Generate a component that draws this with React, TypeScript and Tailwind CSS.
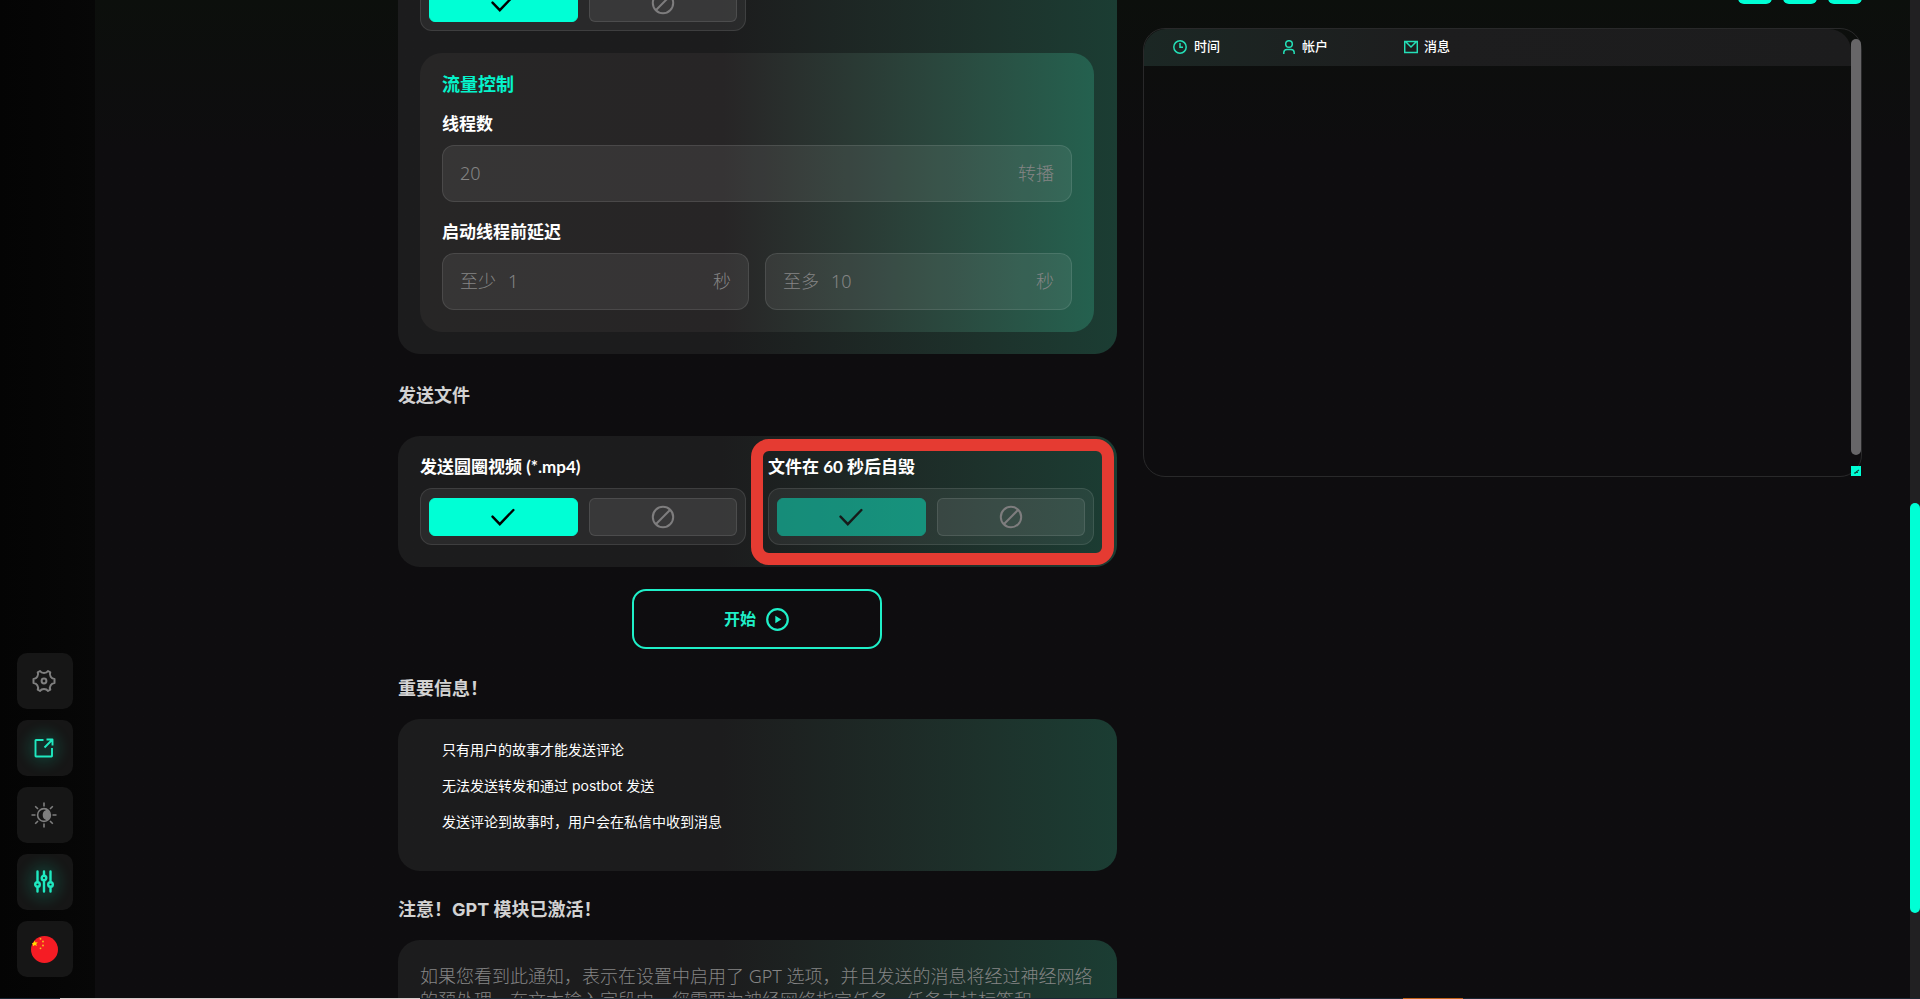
import React, { useId, useState } from "react";

const SANS = "font-['Inter','Noto_Sans_CJK_SC',sans-serif]";
const LABEL = "font-['Lato','Noto_Sans_CJK_SC',sans-serif]";
const PLAIN = "font-['Noto_Sans','Noto_Sans_CJK_SC',sans-serif]";

function CheckIcon() {
  return (
    <svg width="24" height="18" viewBox="0 0 24 18" fill="none" stroke="currentColor" strokeWidth="2.4" strokeLinecap="round" aria-hidden="true">
      <path d="M1.5 8.6 8.8 16.2 22.4 2" strokeLinejoin="miter" />
    </svg>
  );
}

function BanIcon() {
  return (
    <svg width="24" height="24" viewBox="0 0 24 24" fill="none" stroke="currentColor" strokeWidth="2" aria-hidden="true">
      <circle cx="12" cy="12" r="10.2" />
      <path d="M4.8 19.2 19.2 4.8" />
    </svg>
  );
}

function Toggle({ label, disabled = false }: { label?: string; disabled?: boolean }) {
  const id = useId();
  const [on, setOn] = useState(true);
  const active = "border-[#00ffd5] bg-[#00ffd5] text-black";
  const idle = "border-white/10 bg-white/[0.07] text-[#7e7d7e]";
  const base = "flex h-[38px] flex-1 items-center justify-center rounded-md border";
  return (
    <div>
      {label && (
        <h3 id={id} className={`mb-3 text-[17px] leading-[18px] font-bold whitespace-nowrap text-white ${LABEL}`}>
          {label}
        </h3>
      )}
      <div role="group" aria-labelledby={label ? id : undefined} className="flex h-[57px] items-center gap-[11px] rounded-xl border border-white/10 bg-white/[0.06] px-2">
        <button type="button" aria-label="启用" aria-pressed={on} disabled={disabled} onClick={() => setOn(true)} className={`${base} ${on ? active : idle} ${disabled ? "opacity-45" : ""}`}>
          <CheckIcon />
        </button>
        <button type="button" aria-label="禁用" aria-pressed={!on} disabled={disabled} onClick={() => setOn(false)} className={`${base} ${on ? idle : active}`}>
          <BanIcon />
        </button>
      </div>
    </div>
  );
}

function NumberField({ id, prefix, suffix, placeholder }: { id: string; prefix?: string; suffix: string; placeholder: string }) {
  return (
    <div className={`flex h-[57px] min-w-0 items-center gap-3 rounded-xl border border-white/10 bg-white/[0.07] px-[17px] pb-0.5 text-lg font-light text-[#858585] ${PLAIN}`}>
      {prefix && <label htmlFor={id}>{prefix}</label>}
      <input id={id} placeholder={placeholder} inputMode="numeric" className="min-w-0 flex-1 bg-transparent outline-none placeholder:text-[#858585]" />
      <span>{suffix}</span>
    </div>
  );
}

const CARD = "bg-linear-to-r from-[#1c1c1d] from-0% via-[#1c1c1d] via-45% to-[#1b3d33] to-100%";

function Heading({ children }: { children: React.ReactNode }) {
  return <h2 className="text-lg leading-6 font-bold text-[#d2d2d2]">{children}</h2>;
}

function NavButton({ label, glow = false, children }: { label: string; glow?: boolean; children: React.ReactNode }) {
  return (
    <button type="button" aria-label={label} className={`flex size-14 items-center justify-center rounded-[10px] bg-[#161616] pr-0.5 ${glow ? "text-[#1fe9c0]" : "text-[#7f7f7f]"}`}>
      <span className={glow ? "rounded-full bg-[#00ffd5]/10 shadow-[0_0_14px_6px_rgba(0,255,200,0.14)]" : ""}>{children}</span>
    </button>
  );
}

function Sidebar() {
  return (
    <aside className="flex w-[95px] shrink-0 flex-col justify-end gap-[11px] bg-linear-to-r from-[#040404] to-[#070707] pb-[21px] pl-[17px]">
      <NavButton label="设置">
        <svg width="24" height="24" viewBox="0 0 24 24" fill="none" stroke="currentColor" strokeWidth="2" strokeLinejoin="round" aria-hidden="true">
          <circle cx="12" cy="12" r="2.4" />
          <path d="M8 2C8.8 3.3 10.4 4 12 4s3.2-.7 4-2l2.3 1.3C17.6 4.700 17.900 6.500 18.700 7.800S21 10 22.500 10v4c-1.500 0-3 .9-3.800 2.200s-1.100 3.100-.4 4.500L16 22c-.8-1.300-2.400-2-4-2s-3.200.7-4 2l-2.300-1.300c.7-1.400.4-3.200-.4-4.500S3 14 1.500 14v-4C3 10 4.500 9.100 5.300 7.800s1.100-3.100.4-4.500z" />
        </svg>
      </NavButton>
      <NavButton label="打开" glow>
        <svg width="20" height="20" viewBox="0 0 20 20" fill="none" stroke="currentColor" strokeWidth="1.9" strokeLinejoin="round" aria-hidden="true">
          <path d="M9.500 2H2a.5.500 0 0 0-.5.500V18a.5.500 0 0 0 .5.500h15.500a.5.500 0 0 0 .5-.5v-8M10.500 9.500l7.500-7.500M12.500 1.500h6v6" />
        </svg>
      </NavButton>
      <NavButton label="主题">
        <svg width="26" height="26" viewBox="0 0 26 26" fill="none" stroke="currentColor" strokeWidth="1.6" aria-hidden="true">
          <circle cx="13" cy="13" r="6.4" />
          <path d="M16 8.500a5.300 5.300 0 0 1 0 9 4.800 4.800 0 0 1-3.500-4.500A4.800 4.800 0 0 1 16 8.500z" fill="currentColor" />
          <path d="M13 .5v4M13 21.500v4M.5 13h4M21.500 13h4M4.200 4.200 7 7M19 19l2.800 2.800M4.200 21.800 7 19M19 7l2.800-2.800" />
        </svg>
      </NavButton>
      <NavButton label="筛选" glow>
        <svg width="20" height="24" viewBox="0 0 20 24" fill="none" stroke="currentColor" strokeWidth="2.4" strokeLinecap="round" aria-hidden="true">
          <circle cx="3.500" cy="14.500" r="2.300" />
          <circle cx="10" cy="8" r="2.300" />
          <circle cx="16.500" cy="14.500" r="2.300" />
          <path d="M3.500 1.500v10.500M3.500 17v4.500M10 1.500v4M10 10.500v11M16.500 1.500v10.500M16.500 17v4.500" />
        </svg>
      </NavButton>
      <NavButton label="中文">
        <svg width="27" height="27" viewBox="0 0 27 27" aria-hidden="true">
          <circle cx="13.500" cy="13.500" r="13.500" fill="#f51c24" />
          <path d="M3.500 4.500 4.600 6.500 6.800 6.300 5.200 7.900 6 10 3.900 8.900 2 10.300 1.800 8 .8 7.200 3 6.500z" fill="#ffe000" />
          <g fill="#f7c51e">
            <circle cx="9.500" cy="2.800" r=".9" />
            <circle cx="12" cy="5.500" r=".9" />
            <circle cx="12" cy="9.500" r=".9" />
            <circle cx="9.500" cy="12.300" r=".9" />
          </g>
        </svg>
      </NavButton>
    </aside>
  );
}

function LogPanel() {
  return (
    <div className="flex flex-col pt-[18px]">
      <div className="flex justify-end gap-[11px]">
        {["导出", "清除", "展开"].map((name) => (
          <button key={name} type="button" aria-label={name} className="size-[34px] rounded-md bg-[#00ffd5]" />
        ))}
      </div>
      <div className="relative mt-6 flex h-[449px] rounded-[22px] border border-[#29292a]">
        <div className="min-w-0 flex-1 overflow-hidden rounded-t-[22px]">
          <table className="w-full table-fixed text-left text-[13px] font-medium text-white">
            <thead>
              <tr className="h-[37px] bg-linear-to-r from-[#1b2724] via-[#1d1d1e] via-40% to-[#1c1c1d]">
                <th scope="col" className="w-[139px] pb-0.5 pl-[29px] font-medium">
                  <span className="flex items-center gap-[7px]">
                    <svg width="14" height="14" viewBox="0 0 14 14" fill="none" stroke="#24dfb7" strokeWidth="1.500" aria-hidden="true">
                      <circle cx="7" cy="7" r="6.200" />
                      <path d="M7 3v4.300h3" />
                    </svg>
                    时间
                  </span>
                </th>
                <th scope="col" className="w-[121px] pb-0.5 font-medium">
                  <span className="flex items-center gap-[7px]">
                    <svg width="12" height="14" viewBox="0 0 12 14" fill="none" stroke="#24dfb7" strokeWidth="1.500" aria-hidden="true">
                      <circle cx="6" cy="4" r="3.300" />
                      <path d="M.8 14v-1.500A3.200 3.200 0 0 1 4 9.500h4a3.200 3.200 0 0 1 3.200 3V14" />
                    </svg>
                    帐户
                  </span>
                </th>
                <th scope="col" className="pb-0.5 font-medium">
                  <span className="flex items-center gap-1.5">
                    <svg width="14" height="14" viewBox="0 0 14 14" fill="none" stroke="#24dfb7" strokeWidth="1.500" aria-hidden="true">
                      <path d="M.7 1.500h12.600v11H.7zM2 2l5 5 5-5" />
                    </svg>
                    消息
                  </span>
                </th>
              </tr>
            </thead>
            <tbody />
          </table>
        </div>
        <div className="flex w-2.5 flex-col items-center justify-between pt-2.5">
          <div className="h-[416px] w-2.5 rounded-full bg-[#676668]" />
          <svg width="10" height="10" viewBox="0 0 10 10" aria-hidden="true">
            <path d="M0 0h10v10H0z" fill="#00ffd5" />
            <path d="M4 8v-1.500h3M5 6l3-2" stroke="#0a5145" strokeWidth="1.200" fill="none" />
          </svg>
        </div>
      </div>
    </div>
  );
}

export default function App() {
  return (
    <div className={`flex h-screen flex-col overflow-hidden bg-[#0e0d0f] ${SANS}`}>
      <div className="flex min-h-0 flex-1">
        <Sidebar />
        <main className="min-w-0 flex-1 overflow-hidden bg-linear-to-b from-[#0c0f0c] to-[#0e0d0f] to-15% pr-12 pl-[303px]">
          <div className="-mt-12 grid grid-cols-2 gap-[26px]">
            <div className="min-w-0">
              <section className={`rounded-[22px] pt-[22px] pr-[23px] pb-[22px] pl-[22px] ${CARD}`}>
                <div className="grid grid-cols-2 gap-[22px] pb-[22px]">
                  <Toggle />
                </div>
                <div className="rounded-[22px] bg-linear-to-r from-[#272626] via-[#272526] via-45% to-[#24614f] p-[22px]">
                  <h3 className="text-lg leading-5 font-bold text-[#05f3cb]">流量控制</h3>
                  <label htmlFor="threads" className="mt-5 mb-3 block text-[17px] leading-[18px] font-bold text-white">
                    线程数
                  </label>
                  <NumberField id="threads" suffix="转播" placeholder="20" />
                  <h3 className="mt-[21px] mb-3 text-[17px] leading-[18px] font-bold text-white">启动线程前延迟</h3>
                  <div className="grid grid-cols-2 gap-4">
                    <NumberField id="delay-min" prefix="至少" suffix="秒" placeholder="1" />
                    <NumberField id="delay-max" prefix="至多" suffix="秒" placeholder="10" />
                  </div>
                </div>
              </section>

              <div className="pt-[30px] pb-7">
                <Heading>发送文件</Heading>
              </div>
              <section className={`relative grid grid-cols-2 gap-[22px] rounded-[22px] py-[22px] pr-[23px] pl-[22px] ${CARD}`}>
                <Toggle label="发送圆圈视频 (*.mp4)" />
                <Toggle label="文件在 60 秒后自毁" disabled />
                <div className="pointer-events-none absolute top-[3px] right-[3px] bottom-0.5 w-[363px] rounded-[18px] border-12 border-[#e53b32]" />
              </section>

              <div className="flex justify-center pt-[22px] pr-0.5 pb-7">
                <button type="button" className="flex h-[60px] w-[250px] items-center justify-center gap-2.5 rounded-[14px] border-2 border-[#1ff0c8] text-base font-bold text-[#1ff0c8]">
                  开始
                  <svg width="23" height="23" viewBox="0 0 23 23" fill="none" stroke="currentColor" strokeWidth="2.2" aria-hidden="true">
                    <circle cx="11.500" cy="11.500" r="10.300" />
                    <path d="M9.300 7.800v7.400l6-3.700z" fill="currentColor" stroke="none" />
                  </svg>
                </button>
              </div>

              <Heading>重要信息！</Heading>
              <section className={`mt-[18px] h-[152px] rounded-[22px] px-11 pt-[21px] ${CARD}`}>
                <ul className="flex flex-col gap-4 text-sm text-white">
                  <li>只有用户的故事才能发送评论</li>
                  <li>无法发送转发和通过 postbot 发送</li>
                  <li>发送评论到故事时，用户会在私信中收到消息</li>
                </ul>
              </section>

              <div className="pt-[27px] pb-[18px]">
                <Heading>注意！GPT 模块已激活！</Heading>
              </div>
              <section className={`rounded-[22px] pt-6 pr-[22px] pb-6 pl-[22px] ${CARD}`}>
                <p className={`text-lg leading-6 font-light text-[#858585] ${PLAIN}`}>
                  如果您看到此通知，表示在设置中启用了 GPT 选项，并且发送的消息将经过神经网络
                  <br />
                  的预处理。在文本输入字段中，您需要为神经网络指定任务。任务支持标签和
                </p>
              </section>
            </div>
            <LogPanel />
          </div>
        </main>
        <div className="w-2.5 shrink-0 bg-[#212022] pt-[503px]">
          <div className="h-[410px] rounded-full bg-[#00ffd5]" />
        </div>
      </div>
      <footer className="flex h-px shrink-0 bg-[#1b2733]">
        <div className="ml-[60px] w-[360px] bg-[#d9cdcd]" />
        <div className="ml-[860px] w-[60px] bg-[#45424f]" />
        <div className="ml-[63px] w-[60px] bg-[#c2651c]" />
      </footer>
    </div>
  );
}
